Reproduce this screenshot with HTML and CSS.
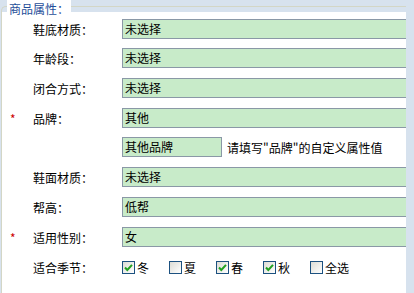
FILE: index.html
```html
<!DOCTYPE html>
<html lang="zh-CN">
<head>
  <meta charset="utf-8">
  <title>商品属性</title>
  <link rel="stylesheet" href="styles.css">
</head>
<body>
  <div class="page">
    <!-- product attributes block -->
    <fieldset class="attrs">
      <legend>商品属性：</legend>
      <div class="form">
        <div class="row tight"><span class="req"></span><span class="name">鞋底材质：</span><span class="field">未选择</span></div>
        <div class="row"><span class="req"></span><span class="name">年龄段：</span><span class="field">未选择</span></div>
        <div class="row"><span class="req"></span><span class="name">闭合方式：</span><span class="field">未选择</span></div>
        <div class="row tight"><span class="req">*</span><span class="name">品牌：</span><span class="field">其他</span></div>
        <div class="row"><span class="req"></span><span class="name"></span><span class="field short">其他品牌</span><span class="hint">请填写"品牌"的自定义属性值</span></div>
        <div class="row"><span class="req"></span><span class="name">鞋面材质：</span><span class="field">未选择</span></div>
        <div class="row"><span class="req"></span><span class="name">帮高：</span><span class="field">低帮</span></div>
        <div class="row"><span class="req">*</span><span class="name">适用性别：</span><span class="field">女</span></div>
        <div class="row"><span class="req"></span><span class="name">适合季节：</span>
          <div class="opts">
            <span class="opt"><span class="box on"><svg viewBox="0 0 11 11"><path d="M2 5.5 L4.3 8 L9 2.8"/></svg></span>冬</span>
            <span class="opt"><span class="box"></span>夏</span>
            <span class="opt"><span class="box on"><svg viewBox="0 0 11 11"><path d="M2 5.5 L4.3 8 L9 2.8"/></svg></span>春</span>
            <span class="opt"><span class="box on"><svg viewBox="0 0 11 11"><path d="M2 5.5 L4.3 8 L9 2.8"/></svg></span>秋</span>
            <span class="opt"><span class="box"></span>全选</span>
          </div>
        </div>
      </div>
    </fieldset>
  </div>
</body>
</html>
```

FILE: styles.css
```css
/* reset & base */
* {
  box-sizing: border-box;
}
body {
  margin: 0;
  background: #d7e2ee;
  color: #000;
  font-family: "Noto Sans CJK SC", sans-serif;
  font-size: 12px;
}
/* visible white area, the blue strip on the right is page background */
.page {
  width: 406px;
  height: 293px;
  overflow: hidden;
}
/* fieldset frame */
.attrs {
  margin: 0 0 0 1px;
  padding: 0;
  min-width: 0;
  border: 1px solid #d3d6c6;
  border-right: 0;
  border-bottom: 0;
  border-radius: 5px 0 0 0;
}
/* legend box is 12px so the frame line sits at y=6, text hangs below */
.attrs legend {
  margin-left: 5px;
  padding: 0 2px;
  height: 12px;
  line-height: normal;
  background: #fff;
  color: #1f4e99;
}
.form {
  background: #fff;
  padding-top: 7px;
  height: 300px;
}
/* form rows */
.row {
  display: flex;
  align-items: center;
  height: 20px;
  margin-bottom: 10px;
}
.row.tight {
  margin-bottom: 9px;
}
.req {
  flex: none;
  width: 31px;
  padding-left: 8px;
  color: #c00;
}
.name {
  flex: none;
  width: 89px;
}
.field {
  flex: none;
  width: 300px;
  height: 20px;
  line-height: 18px;
  padding-left: 2px;
  border: 1px solid #8a98a6;
  background: #c8ebc9;
}
.field.short {
  width: 100px;
}
.hint {
  margin-left: 5px;
  white-space: nowrap;
}
/* season checkboxes */
.opts {
  display: flex;
  align-items: center;
}
.opt {
  display: flex;
  align-items: center;
  gap: 2px;
  width: 47px;
}
.box {
  width: 13px;
  height: 13px;
  border: 1px solid #1c5180;
  background: linear-gradient(135deg, #dcdcd5, #fff);
}
.box svg {
  display: block;
  width: 11px;
  height: 11px;
  fill: none;
  stroke: #21a121;
  stroke-width: 2;
}
```
